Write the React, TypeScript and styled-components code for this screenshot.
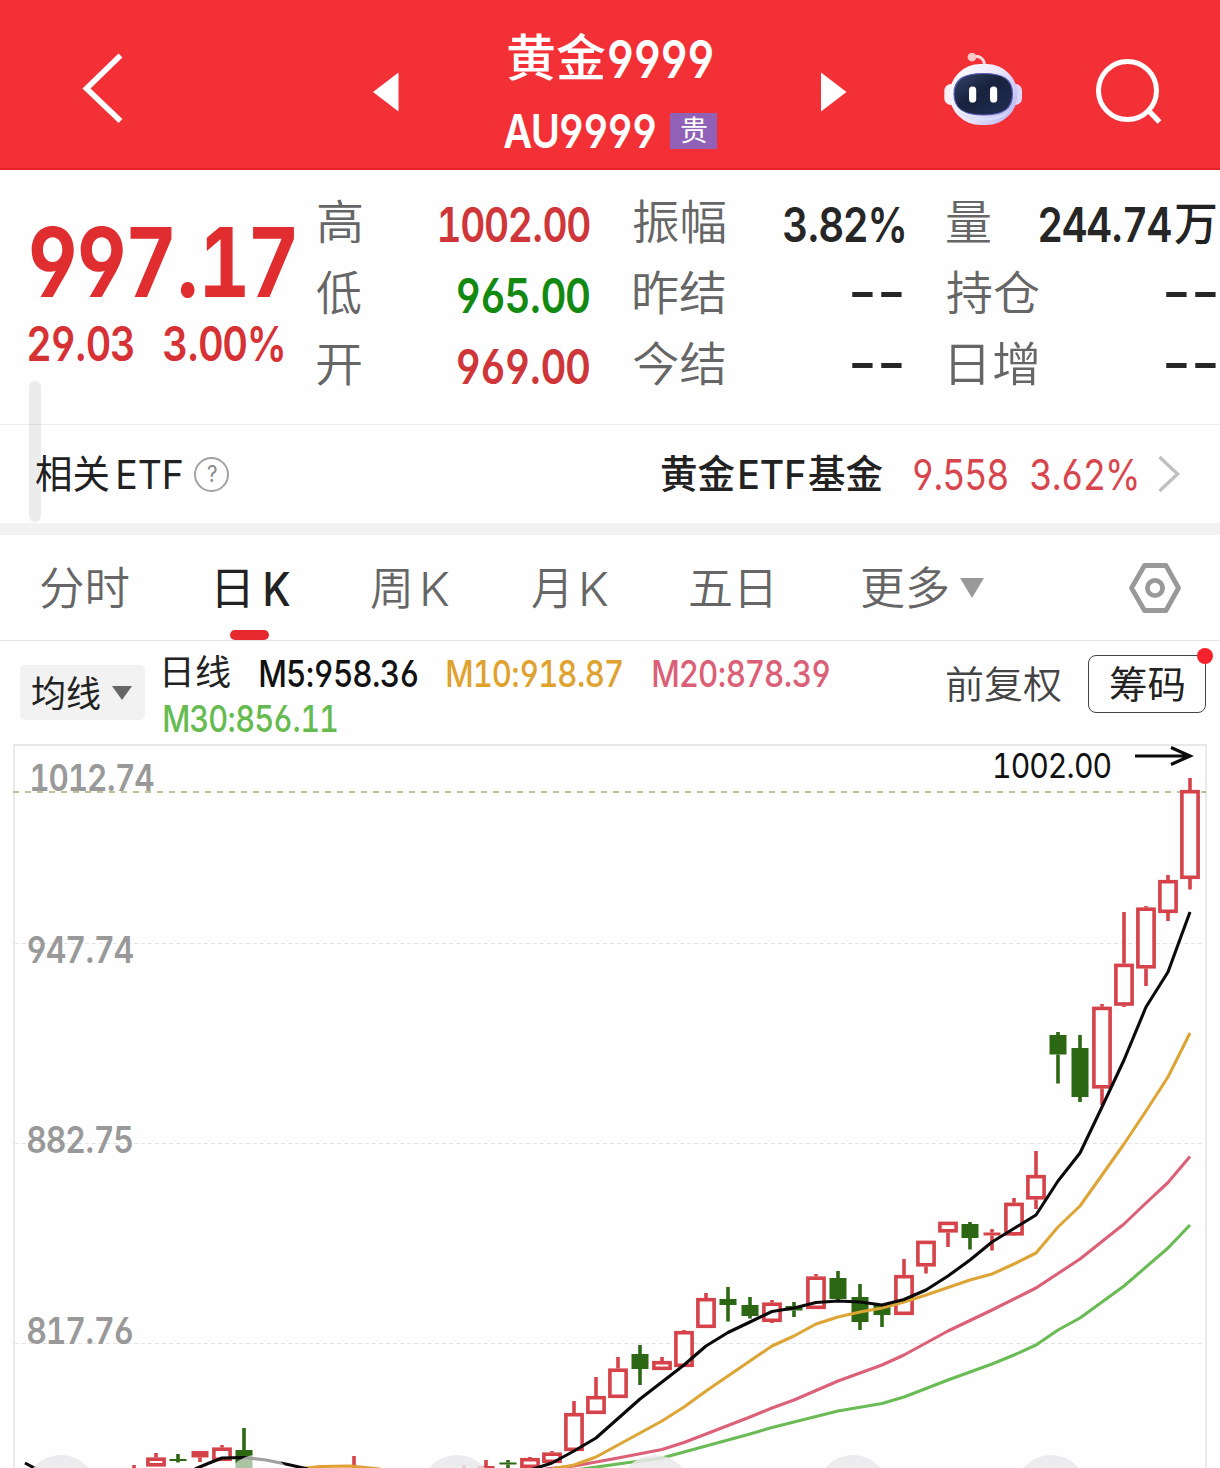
import React, { useLayoutEffect, useRef, useState } from "react";
import styled, { createGlobalStyle } from "styled-components";

const LATIN = 'Inter, "Noto Sans CJK SC", sans-serif';
const CJK = '"Noto Sans CJK SC", sans-serif';

const Global = createGlobalStyle`
  * { box-sizing: border-box; }
  html, body { margin: 0; padding: 0; background: #fefefe; }
  body { width: 1220px; height: 1468px; overflow: hidden; font-family: ${LATIN}; }
`;

/* ---------- text that condenses to a given width ---------- */

const RunBox = styled.span<{ $w: number; $size: number }>`
  display: block;
  flex: none;
  width: ${(p) => p.$w}px;
  height: ${(p) => p.$size}px;
`;

const RunText = styled.span<{ $size: number; $weight: number; $color: string; $cjk: boolean; $track: number }>`
  display: block;
  width: max-content;
  white-space: pre;
  transform-origin: 0 50%;
  font-family: ${(p) => (p.$cjk ? CJK : LATIN)};
  font-size: ${(p) => p.$size}px;
  font-weight: ${(p) => p.$weight};
  line-height: ${(p) => p.$size}px;
  letter-spacing: ${(p) => p.$track}px;
  color: ${(p) => p.$color};
  font-feature-settings: "kern" 0;
`;

/* digits share one advance; the point keeps its own narrow one */
const Digits = styled.span`
  font-feature-settings: "tnum" 1, "cv03" 1, "cv04" 1, "kern" 0;
`;

type RunProps = {
  children: string;
  w: number;
  size: number;
  weight?: number;
  color?: string;
  cjk?: boolean;
  lift?: number;
};

function Run({ children, w, size, weight = 500, color = "#222", cjk = false, lift = 0 }: RunProps) {
  const ref = useRef<HTMLSpanElement>(null);
  const [fit, setFit] = useState({ s: 1, x: 0 });
  const track = /\d/.test(children) ? -0.035 * size : 0;
  useLayoutEffect(() => {
    const ctx = document.createElement("canvas").getContext("2d");
    if (!ctx || !ref.current) return;
    ctx.font = `${weight} ${size}px ${cjk ? CJK : LATIN}`;
    const m = ctx.measureText(children);
    const left = -m.actualBoundingBoxLeft;
    const right = m.width - m.actualBoundingBoxRight;
    const s = w / (ref.current.offsetWidth - track - left - right);
    setFit({ s, x: -left * s });
  }, [children, w, size, weight, cjk, track]);
  const y = (cjk ? -0.056 * size : 0) - lift;
  return (
    <RunBox $w={w} $size={size}>
      <RunText
        ref={ref}
        $size={size}
        $weight={weight}
        $color={color}
        $cjk={cjk}
        $track={track}
        style={{ transform: `translate(${fit.x}px, ${y}px) scaleX(${fit.s})` }}
      >
        {children
          .split(/(\d+)/)
          .filter(Boolean)
          .map((part, i) => (/\d/.test(part) ? <Digits key={i}>{part}</Digits> : part))}
      </RunText>
    </RunBox>
  );
}

/* ---------- layout pieces ---------- */

const Page = styled.div`
  position: relative;
  width: 1220px;
  height: 1468px;
  display: flex;
  flex-direction: column;
  overflow: hidden;
  background: #fefefe;
`;

const Line = styled.div<{ $gap?: number; $before?: number; $after?: number }>`
  display: flex;
  align-items: center;
  gap: ${(p) => p.$gap ?? 0}px;
  margin-left: ${(p) => p.$before ?? 0}px;
  margin-right: ${(p) => p.$after ?? 0}px;
`;

const Header = styled.header`
  flex: none;
  height: 170px;
  display: grid;
  grid-template-columns: 373px 131px 317px 122px 151px 1fr;
  align-items: center;
  background: #f23036;
  border-bottom: 2px solid #e3222b;
`;

const IconSlot = styled.div<{ $top: number; $left?: number }>`
  padding: ${(p) => p.$top}px 0 0 ${(p) => p.$left ?? 0}px;
  line-height: 0;
`;

const Titles = styled.div`
  height: 168px;
  display: flex;
  flex-direction: column;
  align-items: flex-start;
  padding-top: 33px;
  gap: 22px;
`;

const TitleLine = styled(Line)`
  height: 50px;
  padding-left: 4px;
`;

const CodeLine = styled(Line)`
  height: 50px;
  gap: 14px;
`;

const Badge = styled.div`
  width: 47px;
  height: 36px;
  margin-top: 2px;
  display: flex;
  align-items: center;
  justify-content: center;
  background: #9161b8;
`;

const Quote = styled.section`
  flex: none;
  height: 255px;
  display: grid;
  grid-template-columns: 274px 273px 271px 269px;
  column-gap: 43px;
  border-bottom: 1px solid #ececec;
`;

const Price = styled.div`
  padding: 44px 0 0 28px;
  display: flex;
  flex-direction: column;
  gap: 10px;
`;

const BigPrice = styled.div`
  padding-left: 2px;
`;

const Stats = styled.div`
  padding-top: 18px;
`;

const StatRow = styled.div`
  height: 71px;
  display: flex;
  align-items: center;
  justify-content: space-between;
`;

const EtfRow = styled.section`
  flex: none;
  height: 98px;
  display: flex;
  align-items: center;
  justify-content: space-between;
  padding: 0 40px 0 36px;
`;

const Help = styled.span`
  width: 35px;
  height: 35px;
  margin-left: 12px;
  display: flex;
  align-items: center;
  justify-content: center;
  border: 2px solid #a2a2a2;
  border-radius: 50%;
`;

const Chevron = styled.span`
  margin-left: 21px;
  line-height: 0;
`;

const Band = styled.div`
  flex: none;
  height: 12px;
  background: #f2f2f2;
`;

const Tabs = styled.nav`
  flex: none;
  height: 106px;
  display: flex;
  padding-left: 41px;
  border-bottom: 1px solid #e4e4e4;
`;

const Tab = styled.div<{ $after: number; $gap?: number }>`
  position: relative;
  height: 105px;
  display: flex;
  align-items: center;
  gap: ${(p) => p.$gap ?? 0}px;
  margin-right: ${(p) => p.$after}px;
`;

const Marker = styled.i`
  position: absolute;
  left: 13px;
  bottom: 0;
  width: 39px;
  height: 10px;
  border-radius: 5px;
  background: #e5292f;
`;

const Tools = styled.section`
  flex: none;
  height: 103px;
  display: flex;
  align-items: flex-start;
  padding-left: 20px;
`;

const Picker = styled.div`
  flex: none;
  width: 125px;
  height: 55px;
  margin: 24px 19px 0 0;
  padding-left: 12px;
  display: flex;
  align-items: center;
  gap: 12px;
  border-radius: 5px;
  background: #f2f2f2;
`;

const Legend = styled.div`
  flex: none;
  width: 783px;
  padding-top: 10px;
`;

const LegendLine = styled(Line)`
  height: 45px;
`;

const Actions = styled.div`
  display: flex;
  align-items: center;
  height: 58px;
  margin-top: 14px;
  gap: 27px;
`;

const ChipButton = styled.div`
  position: relative;
  flex: none;
  width: 118px;
  height: 58px;
  display: flex;
  align-items: center;
  justify-content: center;
  border: 1px solid #444;
  border-radius: 8px;
`;

const Dot = styled.i`
  position: absolute;
  right: -8px;
  top: -8px;
  width: 16px;
  height: 16px;
  border-radius: 50%;
  background: #f5222d;
`;

const ScrollBar = styled.i`
  position: absolute;
  left: 29px;
  top: 381px;
  width: 12px;
  height: 141px;
  border-radius: 6px;
  background: rgba(0, 0, 0, 0.07);
`;

const ChartBox = styled.section`
  position: relative;
  flex: none;
  height: 724px;
`;

const ChartSvg = styled.svg`
  display: block;
  width: 1220px;
  height: 724px;
`;

const ChartLabel = styled.div<{ $x: number; $y: number }>`
  position: absolute;
  left: ${(p) => p.$x}px;
  top: ${(p) => p.$y}px;
`;

/* ---------- icons ---------- */

const Robot = () => (
  <svg width="80" height="74" viewBox="943 53 80 74">
    <defs>
      <linearGradient id="shell" x1="0" y1="0" x2="1" y2="0.6">
        <stop offset="0" stopColor="#ffffff" />
        <stop offset="0.55" stopColor="#eeeafc" />
        <stop offset="1" stopColor="#c3c0f4" />
      </linearGradient>
      <linearGradient id="face" x1="0" y1="0" x2="1" y2="1">
        <stop offset="0" stopColor="#36416a" />
        <stop offset="0.45" stopColor="#18223d" />
        <stop offset="1" stopColor="#222d55" />
      </linearGradient>
    </defs>
    <path d="M972 57.5C979 55 984 58 984.5 65" fill="none" stroke="#ffd9dc" strokeWidth="3" />
    <circle cx="972" cy="57" r="4.4" fill="#ffc9cc" />
    <rect x="944.3" y="84" width="14" height="21" rx="6.5" fill="#fdeff4" />
    <rect x="1008" y="84" width="14" height="21" rx="6.5" fill="#dcd6fa" />
    <rect x="949.5" y="64" width="68" height="61" rx="31" fill="url(#shell)" />
    <path d="M957 110C967 121 1000 121 1010 110C1002 124 966 124 957 110Z" fill="#d9dffc" />
    <path
      d="M983.5 73.500C1003 73.500 1012.500 79 1012.500 94C1012.500 109 1003 115 983.500 115C964 115 954 109 954 94C954 79 964 73.500 983.500 73.500Z"
      fill="url(#face)"
      stroke="#5a62b8"
      strokeWidth="1.2"
    />
    <rect x="969" y="86.500" width="7.2" height="16" rx="3.6" fill="#fff" />
    <rect x="990" y="86.500" width="7.2" height="16" rx="3.6" fill="#fff" />
  </svg>
);

const Search = () => (
  <svg width="70" height="68" viewBox="1094 57 70 68" fill="none" stroke="#fff">
    <circle cx="1127.5" cy="90.5" r="29" strokeWidth="5" />
    <path d="M1148 110L1159.5 122" strokeWidth="5.4" />
  </svg>
);

const Hexagon = () => (
  <svg width="56" height="54" viewBox="1127 561 56 54" fill="none" stroke="#999" strokeWidth="4.8" strokeLinejoin="round">
    <path d="M1144.5 565.5H1166L1178.5 588L1166 610.5H1144.5L1131.5 588Z" />
    <circle cx="1155" cy="588" r="7.6" />
  </svg>
);

const Triangle = ({ w, h, d, fill }: { w: number; h: number; d: string; fill: string }) => (
  <svg width={w} height={h} viewBox={`0 0 ${w} ${h}`}>
    <path d={d} fill={fill} />
  </svg>
);

/* ---------- stats ---------- */

type Stat = {
  label: string;
  lw: number;
  inset?: number;
  value: string;
  vw: number;
  after?: number;
  color?: string;
  unit?: boolean;
};

const GRAY = "#666";
const RED = "#cf3639";

const columns: Stat[][] = [
  [
    { label: "高", lw: 44, inset: 1, value: "1002.00", vw: 152, color: RED },
    { label: "低", lw: 44, value: "965.00", vw: 133, color: "#128a12" },
    { label: "开", lw: 44, value: "969.00", vw: 133, color: RED },
  ],
  [
    { label: "振幅", lw: 92, value: "3.82%", vw: 120 },
    { label: "昨结", lw: 91, inset: 1, value: "--", vw: 50, after: 2 },
    { label: "今结", lw: 92, value: "--", vw: 50, after: 2 },
  ],
  [
    { label: "量", lw: 43, value: "244.74", vw: 132, unit: true },
    { label: "持仓", lw: 92, value: "--", vw: 50 },
    { label: "日增", lw: 86, inset: 4, value: "--", vw: 50 },
  ],
];

const StatColumn = ({ rows }: { rows: Stat[] }) => (
  <Stats>
    {rows.map((r) => (
      <StatRow key={r.label}>
        <Line $before={r.inset}>
          <Run w={r.lw} size={47} weight={350} color={GRAY} cjk lift={2}>{r.label}</Run>
        </Line>
        <Line $gap={4} $after={r.after}>
          <Run w={r.vw} size={48} weight={600} color={r.color ?? "#262626"} lift={r.value === "--" ? 3 : -1}>{r.value}</Run>
          {r.unit && <Run w={41} size={46} weight={500} cjk lift={1}>万</Run>}
        </Line>
      </StatRow>
    ))}
  </Stats>
);

/* ---------- chart ---------- */

// [x, body top, body bottom, wick top, wick bottom, kind]
type Candle = [number, number, number, number, number, "r" | "g" | "f"];
const candles: Candle[] = [
  [134, 1470, 1474, 1465, 1470, "r"],
  [156, 1457.5, 1466.5, 1453, 1466, "r"],
  [178, 1459, 1461, 1454, 1462.5, "g"],
  [200, 1451, 1457.5, 1451, 1462, "f"],
  [222, 1447.5, 1461, 1445, 1461, "r"],
  [244, 1450, 1470, 1428, 1470, "g"],
  [354, 1470, 1476, 1456, 1470, "f"],
  [464, 1470, 1474, 1465, 1470, "f"],
  [486, 1466, 1474, 1460, 1470, "f"],
  [508, 1462.5, 1464.5, 1460, 1468, "g"],
  [530, 1458, 1468, 1457, 1468, "r"],
  [552, 1452.5, 1463, 1451, 1463, "r"],
  [574, 1413, 1451, 1401, 1451, "r"],
  [596, 1396, 1414, 1377, 1414, "r"],
  [618, 1368.5, 1398, 1357, 1398, "r"],
  [640, 1354, 1369, 1345, 1385, "g"],
  [662, 1361, 1370, 1357, 1370, "r"],
  [684, 1331, 1367, 1330, 1367, "r"],
  [706, 1298, 1328, 1293, 1328, "r"],
  [728, 1299, 1305, 1287, 1321.5, "g"],
  [750, 1305, 1316, 1297, 1318.5, "g"],
  [772, 1302.5, 1322, 1300, 1323, "r"],
  [794, 1306, 1310.5, 1302, 1317, "g"],
  [816, 1276.5, 1309, 1274, 1309, "r"],
  [838, 1278, 1299, 1271, 1301, "g"],
  [860, 1297, 1322, 1284, 1330, "g"],
  [882, 1304, 1315, 1304, 1327, "g"],
  [904, 1275, 1315, 1259, 1315, "r"],
  [926, 1240.7, 1266.5, 1241, 1273.5, "r"],
  [948, 1221.7, 1232.5, 1222, 1247, "r"],
  [970, 1224, 1238, 1222, 1249.5, "g"],
  [992, 1232.5, 1235.5, 1229, 1250.5, "f"],
  [1014, 1202.7, 1235.5, 1198, 1236, "r"],
  [1036, 1175, 1199.5, 1151, 1209, "r"],
  [1058, 1035, 1054.5, 1032, 1083.5, "g"],
  [1080, 1048, 1097, 1035, 1102, "g"],
  [1102, 1006.7, 1088.5, 1004, 1105, "r"],
  [1124, 963.7, 1005.7, 912, 1007, "r"],
  [1146, 907.5, 968.5, 906, 986, "r"],
  [1168, 880, 913, 875, 921, "r"],
  [1190, 790, 879, 778, 889.5, "r"],
];

const ma5a = "25,1463 40,1471";
const ma5b = "195,1469 208,1463.5 222,1458 244,1457.5 266,1460 288,1464.5 308,1469";
const ma5c =
  "530,1470 552,1463 574,1451 596,1438 640,1399 684,1365 706,1346 728,1332.5 750,1322 772,1311.5 794,1308 816,1302.5 838,1301 860,1302 882,1305 904,1299.5 926,1290 948,1276 970,1260 992,1242 1036,1215 1058,1181 1080,1153 1102,1107 1124,1060 1146,1007 1168,972 1190,912";
const ma10a = "298,1469 320,1466.5 350,1466 380,1469";
const ma10b =
  "552,1469 574,1465 596,1457 640,1433 662,1421 684,1407 706,1391 772,1346 794,1336 816,1324 838,1317 860,1312 882,1308 904,1302 926,1295 970,1280 992,1274 1014,1264 1036,1253 1058,1227 1080,1206 1102,1175 1124,1144 1146,1111 1168,1077 1190,1033";
const ma20 =
  "545,1469 574,1466 596,1462 618,1458 662,1449.5 684,1442.5 750,1417 772,1408 794,1400 838,1381 882,1365 904,1355 948,1331 992,1310 1036,1288 1080,1259 1124,1224 1146,1203 1168,1182.5 1190,1156.5";
const ma30 =
  "575,1470 618,1464 662,1458 706,1446 750,1434 772,1427.5 838,1411 882,1403.5 904,1397 948,1380 992,1364 1014,1355 1036,1345 1058,1330 1080,1318 1124,1286 1168,1248 1190,1225";

const axisLabels = [
  { x: 30, y: 15, w: 123, text: "1012.74" },
  { x: 27, y: 187, w: 106, text: "947.74" },
  { x: 27, y: 377, w: 106, text: "882.75" },
  { x: 27, y: 568, w: 106, text: "817.76" },
];

const Chart = () => (
  <ChartBox>
    <ChartSvg viewBox="0 744 1220 724">
      <path d="M14 1468V745H1206V1468" fill="none" stroke="#e8e8e8" strokeWidth="1.8" />
      {[943.5, 1143.5, 1343.5].map((y) => (
        <path key={y} d={`M15 ${y}H1204`} stroke="#e3e3e3" strokeWidth="1" strokeDasharray="4 3" />
      ))}
      <path d="M13 792H1206" stroke="#aeaa78" strokeWidth="1.6" strokeDasharray="6 6" />
      <path d="M1135 756H1189M1171 747.5L1190 756L1171 764.5" fill="none" stroke="#0a0a0a" strokeWidth="3.2" />
      {candles.map(([x, t, b, wt, wb, k]) => {
        const c = k === "g" ? "#2c6714" : "#d5424a";
        return (
          <g key={x} stroke={c} strokeWidth="3.6">
            {wt < t && <path d={`M${x} ${wt}V${t}`} />}
            {wb > b && <path d={`M${x} ${b}V${wb}`} />}
            {k === "r" ? (
              <rect x={x - 8.1} y={t + 1.7} width={16.2} height={b - t - 3.4} fill="#fefefe" />
            ) : (
              <rect x={x - 8.5} y={t} width={17} height={b - t} fill={c} stroke="none" />
            )}
          </g>
        );
      })}
      <g fill="none" strokeWidth="3.1" strokeLinejoin="round">
        <polyline points={ma30} stroke="#6abb56" />
        <polyline points={ma20} stroke="#db6078" />
        <polyline points={ma10a} stroke="#e0a033" />
        <polyline points={ma10b} stroke="#dda536" />
        <polyline points={ma5a} stroke="#0a0a0a" />
        <polyline points={ma5b} stroke="#0a0a0a" />
        <polyline points={ma5c} stroke="#0a0a0a" />
      </g>
      <circle cx="259" cy="1491" r="36.5" fill="#fefefe" fillOpacity="0.62" />
      {[61, 457, 655, 853, 1051].map((x) => (
        <circle key={x} cx={x} cy="1491.5" r="36.5" fill="#e9e8ea" fillOpacity="0.85" />
      ))}
    </ChartSvg>
    {axisLabels.map((l) => (
      <ChartLabel key={l.text} $x={l.x} $y={l.y}>
        <Run w={l.w} size={37} weight={600} color="#999">{l.text}</Run>
      </ChartLabel>
    ))}
    <ChartLabel $x={993} $y={5}>
      <Run w={118} size={34} weight={400} color="#111">1002.00</Run>
    </ChartLabel>
  </ChartBox>
);

/* ---------- page ---------- */

export default function App() {
  return (
    <Page>
      <Global />
      <Header>
        <IconSlot $top={9} $left={82}>
          <svg width="42" height="72" viewBox="82 54 42 72">
            <path d="M120.5 56.5L86.5 89.5L120.5 122" fill="none" stroke="#fff" strokeWidth="5.6" />
          </svg>
        </IconSlot>
        <IconSlot $top={15}>
          <Triangle w={26} h={40} d="M0 20L25.5 0.5V39.5Z" fill="#fff" />
        </IconSlot>
        <Titles>
          <TitleLine $gap={3}>
            <Run w={97} size={50} cjk color="#fff" lift={1}>黄金</Run>
            <Run w={105} size={52} weight={600} color="#fff" lift={-2}>9999</Run>
          </TitleLine>
          <CodeLine>
            <Run w={152} size={47} weight={600} color="#fff">AU9999</Run>
            <Badge><Run w={26} size={28} weight={400} cjk color="#fff">贵</Run></Badge>
          </CodeLine>
        </Titles>
        <IconSlot $top={15}>
          <Triangle w={26} h={40} d="M25.5 20L0 0.5V39.5Z" fill="#fff" />
        </IconSlot>
        <IconSlot $top={12}><Robot /></IconSlot>
        <IconSlot $top={14}><Search /></IconSlot>
      </Header>

      <Quote>
        <Price>
          <BigPrice><Run w={267} size={96} weight={650} color="#e02d2f">997.17</Run></BigPrice>
          <Line $gap={30}>
            <Run w={106} size={48} weight={600} color="#d63236">29.03</Run>
            <Run w={119} size={48} weight={600} color="#d63236">3.00%</Run>
          </Line>
        </Price>
        {columns.map((rows, i) => <StatColumn key={i} rows={rows} />)}
      </Quote>

      <EtfRow>
        <Line>
          <Run w={73} size={39} weight={400} cjk lift={1}>相关</Run>
          <Line $before={9}><Run w={64} size={40} weight={400} lift={-1}>ETF</Run></Line>
          <Help><Run w={10} size={23} weight={400} color="#888">?</Run></Help>
        </Line>
        <Line>
          <Run w={73} size={39} weight={500} cjk lift={1}>黄金</Run>
          <Line $before={5} $after={4}><Run w={65} size={40} lift={-1}>ETF</Run></Line>
          <Run w={74} size={39} weight={500} cjk lift={1}>基金</Run>
          <Line $gap={23} $before={30}>
            <Run w={95} size={42} weight={400} color="#d8454c" lift={-1}>9.558</Run>
            <Run w={106} size={42} weight={400} color="#d8454c" lift={-1}>3.62%</Run>
          </Line>
          <Chevron>
            <svg width="22" height="38" viewBox="0 0 22 38">
              <path d="M1.5 2L19.5 19L1.5 36" fill="none" stroke="#c0c0c0" strokeWidth="3.4" />
            </svg>
          </Chevron>
        </Line>
      </EtfRow>
      <Band />

      <Tabs>
        <Tab $after={88}><Run w={88} size={45} weight={350} color={GRAY} cjk lift={-1}>分时</Run></Tab>
        <Tab $after={81} $gap={17}>
          <Run w={31} size={45} weight={400} cjk lift={-1}>日</Run>
          <Run w={25} size={47} weight={450} lift={-1}>K</Run>
          <Marker />
        </Tab>
        <Tab $after={83} $gap={14}>
          <Run w={38} size={45} weight={350} color={GRAY} cjk lift={-1}>周</Run>
          <Run w={26} size={47} weight={350} color={GRAY} lift={-1}>K</Run>
        </Tab>
        <Tab $after={82} $gap={16}>
          <Run w={34} size={45} weight={350} color={GRAY} cjk lift={-1}>月</Run>
          <Run w={26} size={47} weight={350} color={GRAY} lift={-1}>K</Run>
        </Tab>
        <Tab $after={91}><Run w={81} size={45} weight={350} color={GRAY} cjk lift={-1}>五日</Run></Tab>
        <Tab $after={143} $gap={12}>
          <Run w={86} size={45} weight={350} color={GRAY} cjk lift={-1}>更多</Run>
          <Triangle w={24} h={20} d="M0 0H24L12 20Z" fill="#999" />
        </Tab>
        <Tab $after={0}><Hexagon /></Tab>
      </Tabs>

      <Tools>
        <Picker>
          <Run w={68} size={36} weight={400} cjk>均线</Run>
          <Triangle w={20} h={14} d="M0 0H20L10 14Z" fill="#666" />
        </Picker>
        <Legend>
          <LegendLine $gap={29.5}>
            <Line $before={1}><Run w={65} size={35} weight={400} cjk lift={2}>日线</Run></Line>
            <Run w={158} size={37} weight={550} color="#111">M5:958.36</Run>
            <Run w={176} size={37} weight={550} color="#dfa22f">M10:918.87</Run>
            <Run w={177} size={37} weight={550} color="#db5f76">M20:878.39</Run>
          </LegendLine>
          <LegendLine>
            <Run w={173} size={37} weight={550} color="#66bb50">M30:856.11</Run>
          </LegendLine>
        </Legend>
        <Actions>
          <Run w={114} size={38} weight={350} color="#444" cjk>前复权</Run>
          <ChipButton>
            <Run w={74} size={38} weight={400} color="#222" cjk>筹码</Run>
            <Dot />
          </ChipButton>
        </Actions>
      </Tools>

      <Chart />
      <ScrollBar />
    </Page>
  );
}
